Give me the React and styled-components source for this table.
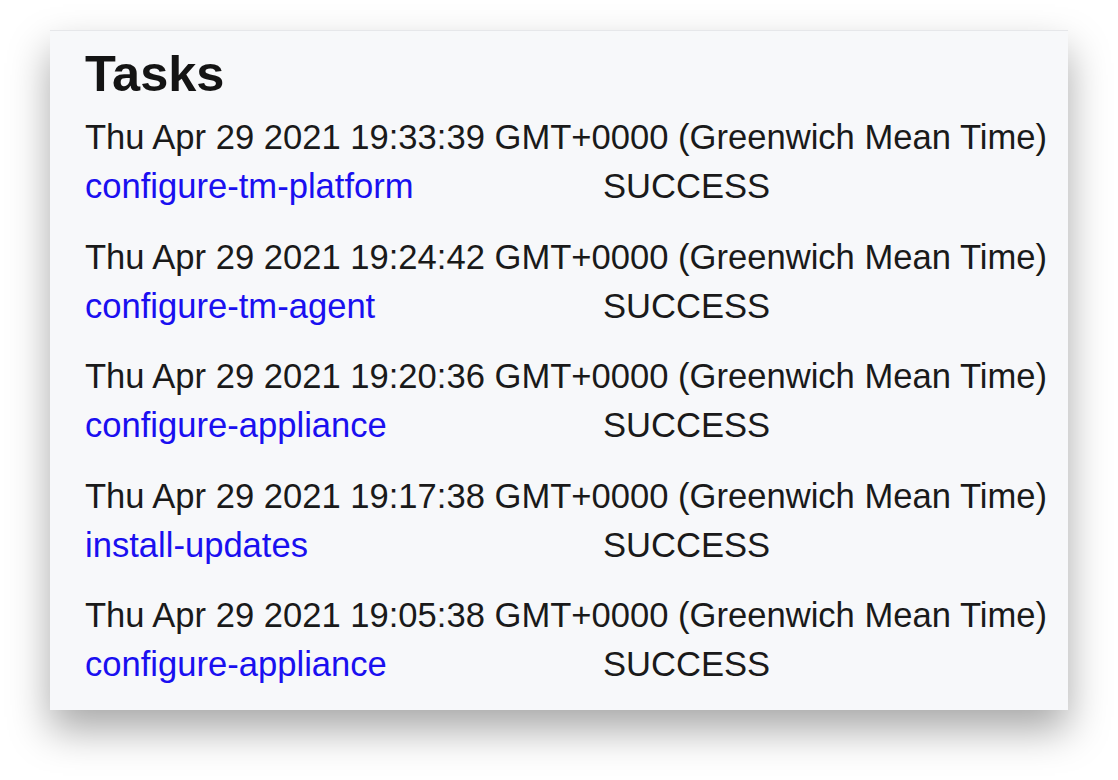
import styled, { createGlobalStyle } from 'styled-components';

const tasks = [
  { date: 'Thu Apr 29 2021 19:33:39 GMT+0000 (Greenwich Mean Time)', name: 'configure-tm-platform', status: 'SUCCESS' },
  { date: 'Thu Apr 29 2021 19:24:42 GMT+0000 (Greenwich Mean Time)', name: 'configure-tm-agent', status: 'SUCCESS' },
  { date: 'Thu Apr 29 2021 19:20:36 GMT+0000 (Greenwich Mean Time)', name: 'configure-appliance', status: 'SUCCESS' },
  { date: 'Thu Apr 29 2021 19:17:38 GMT+0000 (Greenwich Mean Time)', name: 'install-updates', status: 'SUCCESS' },
  { date: 'Thu Apr 29 2021 19:05:38 GMT+0000 (Greenwich Mean Time)', name: 'configure-appliance', status: 'SUCCESS' },
];

export default function App() {
  return (
    <>
      <GlobalStyle />
      <Page>
        <Card>
          <Title>Tasks</Title>
          <List>
            {tasks.map((task, i) => (
              <Row key={i}>
                <DateLine>{task.date}</DateLine>
                <TaskLink href="#">{task.name}</TaskLink>
                <Status>{task.status}</Status>
              </Row>
            ))}
          </List>
        </Card>
      </Page>
    </>
  );
}

const GlobalStyle = createGlobalStyle`
  body {
    margin: 0;
    background: #ffffff;
    font-family: 'Liberation Sans', Arial, sans-serif;
  }
`;

const Page = styled.div`
  min-height: 780px;
  padding: 30px 0 0 50px;
  box-sizing: border-box;
`;

const Card = styled.div`
  box-sizing: border-box;
  width: 1018px;
  height: 680px;
  padding: 13px 35px 22px;
  background: #f7f8fa;
  border-top: 1px solid #e6e7ea;
  box-shadow: 0 20px 38px rgba(0, 0, 0, 0.34);
`;

const Title = styled.h2`
  margin: 0 0 10px;
  font-size: 50.5px;
  line-height: 59px;
  font-weight: 700;
  color: #141414;
`;

const List = styled.div`
  display: flex;
  flex-direction: column;
  gap: 21.5px;
`;

const Row = styled.div`
  display: grid;
  grid-template-columns: 518px auto;
  font-size: 34.6px;
  line-height: 49px;
  color: #1a1a1a;
`;

const DateLine = styled.div`
  grid-column: 1 / -1;
  white-space: nowrap;
`;

const TaskLink = styled.a`
  color: #1a0ff0;
  text-decoration: none;
`;

const Status = styled.span`
  color: #1a1a1a;
`;
